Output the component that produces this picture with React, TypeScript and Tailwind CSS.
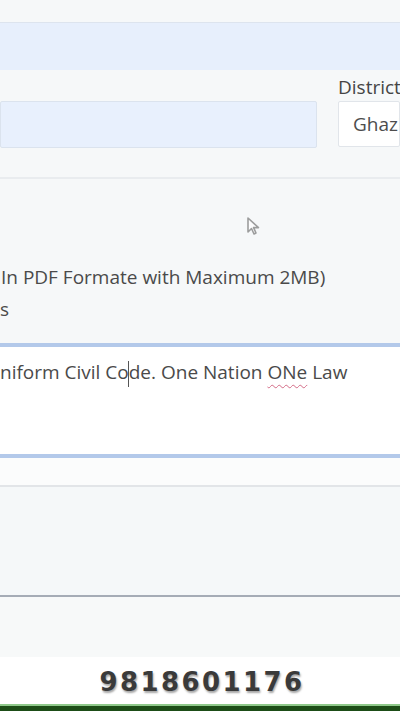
import React from "react";

function Pointer() {
  return (
    <svg width="14" height="20" viewBox="0 0 14 20" className="absolute left-[246px] top-[216px] opacity-70">
      <path d="M2 2 L2 16 L5.5 12.5 L8 18 L10 17 L7.6 11.6 L12.5 11.6 Z" fill="#fff" stroke="#777" strokeWidth="1.6" strokeLinejoin="round" />
    </svg>
  );
}

export default function App() {
  return (
    <div className="relative w-[400px] h-[711px] overflow-hidden bg-[#f6f8f9] flex flex-col text-[#4a4a4a] [font-family:'Open_Sans','Noto_Sans',sans-serif]">
      <div className="h-[22px] bg-[#f6f8f9] shrink-0" />
      {/* header band */}
      <div className="h-[48px] shrink-0 bg-[#e7effc] border-t border-[#dde4ee]" />

      {/* inputs row */}
      <div className="flex gap-[21px] pt-[5px] shrink-0">
        <div className="w-[317px] shrink-0 flex flex-col">
          <div className="h-[26px]" />
          <div className="h-[47px] bg-[#e8f0fd] border border-[#dbe3ee] rounded-[2px]" />
        </div>
        <div className="flex-1 min-w-0 flex flex-col">
          <div className="h-[26px] text-[19px] leading-[24px] text-[#454545] whitespace-nowrap">District</div>
          <div className="h-[46px] bg-white border border-[#e1e5ea] rounded-[2px] flex items-center pl-[14px] text-[19px] text-[#4d4d4d] whitespace-nowrap overflow-hidden">
            Ghazi
          </div>
        </div>
      </div>

      {/* divider */}
      <div className="mt-[29px] h-[2px] bg-[#e9ecef] shrink-0" />

      <div className="h-[85px] shrink-0" />
      <div className="text-[19px] leading-[26px] text-[#4a4a4a] whitespace-nowrap pl-[1px]">
        In PDF Formate with Maximum 2MB)
      </div>
      <div className="text-[19px] leading-[26px] text-[#4a4a4a] whitespace-nowrap mt-[6px]">s</div>

      {/* textarea */}
      <div className="mt-[21px] h-[115px] shrink-0 bg-white border-y-[4px] border-[#b3c9ea] pt-[12px]">
        <div className="text-[19px] leading-[26px] text-[#4a4a4a] whitespace-nowrap">
          niform Civil Co
          <span className="inline-block w-[1px] h-[26px] bg-[#555] align-middle -mx-[0.5px]" />
          de. One Nation{" "}
          <span className="underline decoration-wavy decoration-[#d36b86] underline-offset-[5px] decoration-[1px]">ONe</span> Law
        </div>
      </div>

      <div className="h-[27px] shrink-0 bg-[#fbfcfc]" />
      <div className="h-[2px] shrink-0 bg-[#e2e5e8]" />
      <div className="h-[108px] shrink-0 bg-[#f5f8f9]" />
      <div className="h-[2px] shrink-0 bg-[#a5acb6]" />
      <div className="h-[60px] shrink-0 bg-[#f7f9f9]" />

      {/* phone number bar */}
      <div className="flex-1 bg-white flex items-start justify-center pt-[8px]">
        <span className="text-[26px] leading-[34px] font-bold tracking-[2.4px] text-[#3a3a3a] [font-family:'DejaVu_Sans',sans-serif] [text-shadow:1px_2px_2px_rgba(0,0,0,0.35)] pl-[4px]">
          9818601176
        </span>
      </div>
      <div className="h-[2px] shrink-0 bg-[#8fc98a]" />
      <div className="h-[5px] shrink-0 bg-[#1d4d17]" />

      <Pointer />
    </div>
  );
}
